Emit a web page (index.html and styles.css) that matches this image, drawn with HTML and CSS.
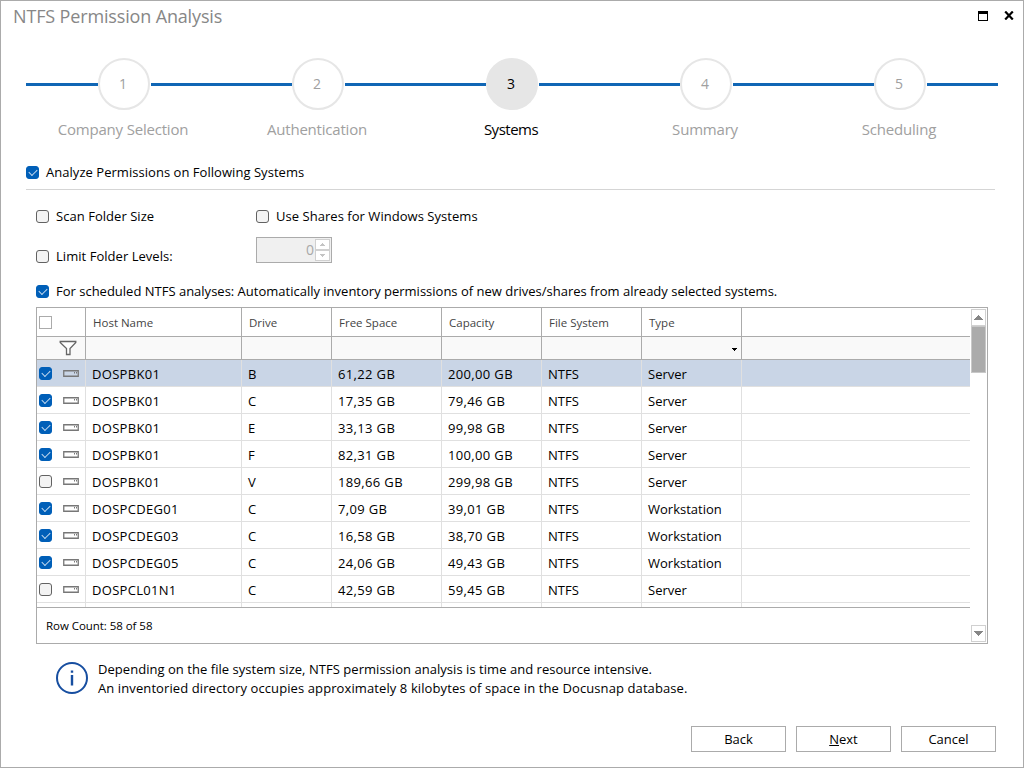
FILE: index.html
```
<!DOCTYPE html>
<html lang="en">
<head>
    <meta charset="UTF-8">
    <meta name="viewport" content="width=device-width, initial-scale=1.0">
    <title>NTFS Permission Analysis</title>
    <link rel="stylesheet" href="styles.css">
</head>
<body>
    <div class="window">
        <header class="titlebar">
            <h1>NTFS Permission Analysis</h1>
            <svg class="win-max" width="10" height="10" viewBox="0 0 10 10"><path d="M0 0h10v10H0zM1 3v6h8V3z" fill="#000" fill-rule="evenodd"/></svg>
            <svg class="win-close" width="10" height="9" viewBox="0 0 10 9"><path d="M1.2 .5l7.6 8M8.8 .5l-7.6 8" stroke="#000" stroke-width="2.2"/></svg>
        </header>

        <div class="steps">
            <div class="step"><div class="track"><span class="circle">1</span></div><div class="step-name">Company Selection</div></div>
            <div class="step"><div class="track"><span class="circle">2</span></div><div class="step-name">Authentication</div></div>
            <div class="step active"><div class="track"><span class="circle">3</span></div><div class="step-name">Systems</div></div>
            <div class="step"><div class="track"><span class="circle">4</span></div><div class="step-name">Summary</div></div>
            <div class="step"><div class="track"><span class="circle">5</span></div><div class="step-name">Scheduling</div></div>
        </div>

        <div class="section-head">
            <label class="option"><span class="check on"></span>Analyze Permissions on Following Systems</label>
        </div>

        <div class="options">
            <label class="option"><span class="check"></span>Scan Folder Size</label>
            <label class="option"><span class="check"></span>Use Shares for Windows Systems</label>
            <label class="option"><span class="check"></span>Limit Folder Levels:</label>
            <div class="spinner">
                <span class="spinner-value">0</span>
                <span class="spinner-buttons">
                    <span><svg width="5" height="3" viewBox="0 0 5 3"><path d="M2 0h1v1h1v1h1v1H0V2h1V1h1z"/></svg></span>
                    <span><svg width="5" height="3" viewBox="0 0 5 3"><path d="M0 0h5v1H4v1H3v1H2V2H1V1H0z"/></svg></span>
                </span>
            </div>
        </div>
        <label class="option scheduled"><span class="check on"></span>For scheduled NTFS analyses: Automatically inventory permissions of new drives/shares from already selected systems.</label>

        <div class="grid-box">
            <div class="grid-main">
                <div class="row head">
                    <div><span class="check square"></span></div><div>Host Name</div><div>Drive</div><div>Free Space</div><div>Capacity</div><div>File System</div><div>Type</div><div></div>
                </div>
                <div class="row filter">
                    <div><svg class="funnel" width="18" height="16" viewBox="0 0 18 16"><path d="M1.2 1.5h15.6v1L11 8.5v6H7.5v-6L1.2 2.5z" fill="#fff" stroke="#666" stroke-width="1.3"/></svg></div><div></div><div></div><div></div><div></div><div></div><div><svg class="dropdown" width="5" height="3" viewBox="0 0 5 3"><path d="M0 0h5v1H4v1H3v1H2V2H1V1H0z"/></svg></div><div></div>
                </div>
                <div class="rows" id="rows"></div>
                <div class="row-count">Row Count: 58 of 58</div>
            </div>
            <div class="scrollbar">
                <span class="arrow"><svg width="9" height="5" viewBox="0 0 9 5"><path d="M4 0h1v1h1v1h1v1h1v1h1v1H0V4h1V3h1V2h1V1h1z"/></svg></span>
                <span class="thumb"></span>
                <span class="arrow down"><svg width="9" height="5" viewBox="0 0 9 5"><path d="M0 0h9v1H8v1H7v1H6v1H5v1H4V4H3V3H2V2H1V1H0z"/></svg></span>
            </div>
        </div>

        <div class="info">
            <svg width="32" height="32" viewBox="0 0 32 32"><circle cx="16" cy="16" r="15" fill="none" stroke="#174ea0" stroke-width="2"/><path d="M14.8 8.5h2.4v2.3h-2.4zM14.8 13h2.4v10.5h-2.4z" fill="#174ea0"/></svg>
            <div>
                <p>Depending on the file system size, NTFS permission analysis is time and resource intensive.</p>
                <p class="wide">An inventoried directory occupies approximately 8 kilobytes of space in the Docusnap database.</p>
            </div>
        </div>

        <footer class="buttons">
            <button type="button">Back</button>
            <button type="button"><u>N</u>ext</button>
            <button type="button">Cancel</button>
        </footer>
    </div>

    <script>
        const drives = [
            [true, 'DOSPBK01', 'B', '61,22 GB', '200,00 GB', 'NTFS', 'Server'],
            [true, 'DOSPBK01', 'C', '17,35 GB', '79,46 GB', 'NTFS', 'Server'],
            [true, 'DOSPBK01', 'E', '33,13 GB', '99,98 GB', 'NTFS', 'Server'],
            [true, 'DOSPBK01', 'F', '82,31 GB', '100,00 GB', 'NTFS', 'Server'],
            [false, 'DOSPBK01', 'V', '189,66 GB', '299,98 GB', 'NTFS', 'Server'],
            [true, 'DOSPCDEG01', 'C', '7,09 GB', '39,01 GB', 'NTFS', 'Workstation'],
            [true, 'DOSPCDEG03', 'C', '16,58 GB', '38,70 GB', 'NTFS', 'Workstation'],
            [true, 'DOSPCDEG05', 'C', '24,06 GB', '49,43 GB', 'NTFS', 'Workstation'],
            [false, 'DOSPCL01N1', 'C', '42,59 GB', '59,45 GB', 'NTFS', 'Server']
        ];
        const driveIcon = '<svg class="drive" width="16" height="7" viewBox="0 0 16 7"><path d="M.75 .75h14.5v5.5H.75z" fill="none" stroke="#777" stroke-width="1.3"/><path d="M11 2h1v1.6h-1zM13 2h1v1.6h-1z" fill="#777"/></svg>';

        let html = '';
        drives.forEach(([checked, ...cells], i) => {
            html += `<div class="row data${i === 0 ? ' selected' : ''}"><div><span class="check${checked ? ' on' : ''}"></span>${driveIcon}</div>`;
            html += cells.map(c => `<div>${c}</div>`).join('') + '<div></div></div>';
        });
        // next row is only partly scrolled into view
        html += '<div class="row data">' + '<div></div>'.repeat(8) + '</div>';
        document.getElementById('rows').innerHTML = html;
    </script>
</body>
</html>
```
FILE: styles.css
```
* {
    box-sizing: border-box;
}
body {
    margin: 0;
    font-family: "Open Sans", "Noto Sans", sans-serif;
    font-size: 13px;
    color: #000;
    background-color: #fff;
}
.window {
    width: 1024px;
    height: 768px;
    border: 1px solid #ababab;
    overflow: hidden;
}
.titlebar {
    display: flex;
    align-items: flex-start;
    height: 57px;
    padding: 3px 9px 0 12px;
}
.titlebar h1 {
    margin: 0;
    flex: 1;
    font-size: 18px;
    font-weight: normal;
    line-height: 25px;
    letter-spacing: -0.15px;
    color: #878787;
}
.win-max {
    margin: 7px 16px 0 0;
}
.win-close {
    margin-top: 7px;
}

/* wizard steps */
.steps {
    display: flex;
    padding-left: 25px;
}
.step {
    width: 194px;
    color: #a0a0a0;
    text-align: center;
}
.step:last-child {
    width: 196px;
}
.track {
    display: flex;
    align-items: center;
    height: 52px;
}
.track::before, .track::after {
    content: "";
    height: 3px;
    background: #1066b5;
}
.track::before {
    width: 72px;
}
.track::after {
    flex: 1;
}
.circle {
    width: 52px;
    height: 52px;
    margin-right: 1px;
    padding-right: 2px;
    border: 2px solid #e6e6e6;
    border-radius: 50%;
    font-size: 14px;
    line-height: 48px;
}
.step-name {
    width: 194px;
    margin-top: 8px;
    font-size: 15px;
    line-height: 22px;
    letter-spacing: -0.2px;
}
.active {
    color: #000;
}
.active .circle {
    background: #e6e6e6;
}
.active .step-name {
    letter-spacing: -0.5px;
}

/* checkboxes */
.option {
    display: flex;
    align-items: center;
    line-height: 20px;
    white-space: nowrap;
}
.check {
    display: flex;
    justify-content: center;
    flex: none;
    width: 13px;
    height: 13px;
    border: 1px solid #626262;
    border-radius: 3px;
    background: #f3f3f3;
}
.option .check {
    margin-right: 7px;
}
.check.on {
    border-color: #005fb8;
    background: #005fb8;
}
.check.on::after {
    content: "";
    width: 7px;
    height: 4px;
    margin-top: 2px;
    border: solid #c4daf0;
    border-width: 0 0 1px 1px;
    transform: rotate(-45deg);
}
.check.square {
    border-color: #ababab;
    border-radius: 0;
    background: #fff;
}
.section-head {
    margin: 22px 28px 0 25px;
    height: 28px;
    border-bottom: 1px solid #d5d5d5;
}
.section-head .option, .options .option {
    letter-spacing: 0.04px;
}
.options {
    display: grid;
    grid-template-columns: 220px 300px;
    grid-template-rows: 20px 27px;
    row-gap: 11px;
    margin: 16px 0 0 35px;
}
.options .option:nth-child(3) {
    padding-top: 11px;
}
.spinner {
    display: flex;
    justify-content: flex-end;
    width: 76px;
    height: 26px;
    padding: 1px;
    border: 1px solid #ababab;
    background: #f0f0f0;
    color: #a8a8a8;
}
.spinner-value {
    line-height: 22px;
    font-size: 14px;
}
.spinner-buttons {
    display: flex;
    flex-direction: column;
    width: 15px;
    margin-left: 1px;
}
.spinner-buttons span {
    display: flex;
    align-items: center;
    justify-content: center;
    height: 11px;
    border: 1px solid #d0d0d0;
    background: #fff;
    fill: #c4c4c4;
}
.scheduled {
    margin: 17px 0 0 35px;
}

/* drive list */
.grid-box {
    display: flex;
    width: 952px;
    height: 337px;
    margin: 6px 0 0 35px;
    border: 1px solid #ababab;
}
.grid-main {
    width: 933px;
}
.row {
    display: grid;
    grid-template-columns: 49px 156px 90px 110px 100px 100px 100px 1fr;
    border-bottom: 1px solid #ababab;
}
.row > div {
    display: flex;
    align-items: center;
    padding-left: 7px;
    border-right: 1px solid #ababab;
}
.row > div:first-child {
    padding-left: 2px;
}
.row > div:last-child {
    border-right: none;
}
.head {
    height: 29px;
    font-size: 11.5px;
    color: #444;
}
.filter {
    height: 23px;
    background: #f9f9f9;
}
.funnel {
    margin-left: 20px;
}
.row > div .dropdown {
    margin: 2px 4px 0 auto;
}
.rows {
    height: 248px;
    overflow: hidden;
    border-bottom: 1px solid #ababab;
}
.data {
    height: 27px;
    border-color: #e0e0e0;
}
.data > div {
    padding: 1px 0 0 6px;
    border-color: #e0e0e0;
}
.data > div:first-child {
    padding-top: 0;
}
.data > div:nth-child(2) {
    letter-spacing: 0.3px;
}
.data > div:nth-child(4), .data > div:nth-child(5) {
    letter-spacing: 0.35px;
}
.selected {
    background: #c9d5e6;
}
.drive {
    margin-left: 11px;
}
.row-count {
    padding-left: 9px;
    font-size: 11.5px;
    line-height: 36px;
    letter-spacing: -0.05px;
}
.scrollbar {
    display: flex;
    flex-direction: column;
    width: 15px;
    margin: 1px 0 1px 1px;
}
.arrow {
    display: flex;
    align-items: center;
    justify-content: center;
    height: 17px;
    border: 1px solid #d0d0d0;
    fill: #868686;
}
.thumb {
    height: 47px;
    border: 1px solid #c8c8c8;
    background: #ababab;
}
.down {
    margin-top: auto;
}

.info {
    display: flex;
    align-items: center;
    margin: 16px 0 0 55px;
}
.info svg {
    margin: 0 10px 2px 0;
}
.info p {
    margin: 0;
    line-height: 19px;
    letter-spacing: 0.04px;
}
.info .wide {
    letter-spacing: 0.1px;
}
.buttons {
    display: flex;
    justify-content: flex-end;
    gap: 10px;
    margin: 28px 27px 0 0;
}
.buttons button {
    width: 95px;
    height: 26px;
    padding: 0;
    border: 1px solid #ababab;
    background: #fff;
    color: #000;
    font: inherit;
}
```
